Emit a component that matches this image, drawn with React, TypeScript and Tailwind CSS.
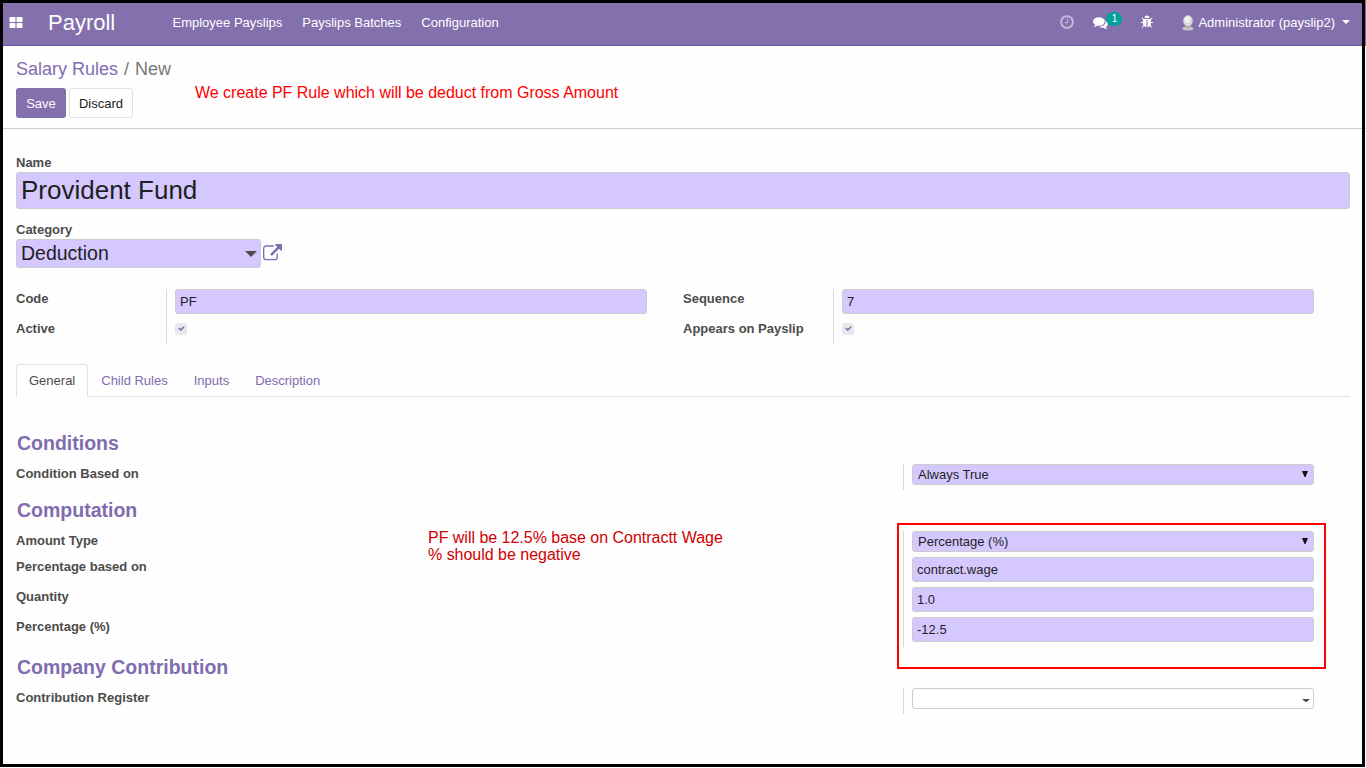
import type { ReactNode } from "react";

const icons = {
  thLarge:
    "M832 1024v384q0 52-38 90t-90 38h-512q-52 0-90-38t-38-90v-384q0-52 38-90t90-38h512q52 0 90 38t38 90zm0-768v384q0 52-38 90t-90 38h-512q-52 0-90-38t-38-90v-384q0-52 38-90t90-38h512q52 0 90 38t38 90zm896 768v384q0 52-38 90t-90 38h-512q-52 0-90-38t-38-90v-384q0-52 38-90t90-38h512q52 0 90 38t38 90zm0-768v384q0 52-38 90t-90 38h-512q-52 0-90-38t-38-90v-384q0-52 38-90t90-38h512q52 0 90 38t38 90z",
  clock:
    "M1024 544v448q0 14-9 23t-23 9h-320q-14 0-23-9t-9-23v-64q0-14 9-23t23-9h224v-352q0-14 9-23t23-9h64q14 0 23 9t9 23zm416 352q0-148-73-273t-198-198-273-73-273 73-198 198-73 273 73 273 198 198 273 73 273-73 198-198 73-273zm224 0q0 209-103 385.5t-279.5 279.5-385.5 103-385.5-103-279.5-279.5-103-385.5 103-385.5 279.5-279.5 385.5-103 385.5 103 279.5 279.5 103 385.5z",
  comments:
    "M1408 768q0 139-94 257t-256.5 186.5-353.5 68.5q-86 0-176-16-124 88-278 128-36 9-86 16h-3q-11 0-20.5-8t-11.5-21q-1-3-1-6.5t.5-6.5 2-6l2.5-5 3.5-5.5 4-5 4.5-5 4-4.5q5-6 23-25t26-29.5 22.5-29 25-38.5 20.5-44q-124-72-195-177t-71-224q0-139 94-257t256.5-186.5 353.5-68.5 353.5 68.5 256.5 186.5 94 257zm384 256q0 120-71 224.5t-195 176.5q10 24 20.5 44t25 38.5 22.5 29 26 29.5 23 25q1 1 4 4.5t4.5 5 4 5 3.5 5.5l2.5 5 2 6 .5 6.5-1 6.5q-3 14-13 22t-22 7q-50-7-86-16-154-40-278-128-90 16-176 16-271 0-472-132 58 4 88 4 161 0 309-45t264-129q125-92 192-212t67-254q0-77-23-152 129 71 204 178t75 230z",
  bug: "M1696 960q0 26-19 45t-45 19h-224q0 171-67 290l208 209q19 19 19 45t-19 45q-18 19-45 19t-45-19l-198-197q-5 5-15 13t-42 28.5-65 36.5-82 29-97 13v-896h-128v896q-51 0-101.5-13.5t-87-33-66-39-43.5-32.5l-15-14-183 207q-20 21-48 21-24 0-43-16-19-18-20.5-44.5t15.5-46.5l202-227q-58-114-58-274h-224q-26 0-45-19t-19-45 19-45 45-19h224v-294l-173-173q-19-19-19-45t19-45 45-19 45 19l173 173h844l173-173q19-19 45-19t45 19 19 45-19 45l-173 173v294h224q26 0 45 19t19 45zm-480-576h-640q0-133 93.5-226.5t226.5-93.5 226.5 93.5 93.5 226.5z",
  externalLink:
    "M1408 928v320q0 119-84.5 203.5t-203.5 84.5h-832q-119 0-203.5-84.5t-84.5-203.5v-832q0-119 84.5-203.5t203.5-84.5h704q14 0 23 9t9 23v64q0 14-9 23t-23 9h-704q-66 0-113 47t-47 113v832q0 66 47 113t113 47h832q66 0 113-47t47-113v-320q0-14 9-23t23-9h64q14 0 23 9t9 23zm384-864v512q0 26-19 45t-45 19-45-19l-176-176-652 652q-10 10-23 10t-23-10l-114-114q-10-10-10-23t10-23l652-652-176-176q-19-19-19-45t19-45 45-19h512q26 0 45 19t19 45z",
  check:
    "M1671 566q0 40-28 68l-724 724-136 136q-28 28-68 28t-68-28l-136-136-362-362q-28-28-28-68t28-68l136-136q28-28 68-28t68 28l294 295 656-657q28-28 68-28t68 28l136 136q28 28 28 68z",
};

const menus = ["Employee Payslips", "Payslips Batches", "Configuration"];
const tabs = ["General", "Child Rules", "Inputs", "Description"];

function Icon({ name, className }: { name: keyof typeof icons; className: string }) {
  return (
    <svg viewBox="0 0 1792 1792" fill="currentColor" className={className} aria-hidden="true">
      <path d={icons[name]} />
    </svg>
  );
}

function Avatar() {
  return (
    <svg viewBox="0 0 12 16" className="mr-1 h-4 w-3" aria-hidden="true">
      <path d="M.3 14.2q0-2 3.4-2.6h4.6q3.2.6 3.2 2.6-2 1.3-5.6 1.3T.3 14.2z" fill="#c9c9c9" />
      <path d="M3.6 10h4.8v3q-2.4 1-4.8 0z" fill="#b0b0b0" />
      <ellipse cx="6" cy="5.8" rx="4.8" ry="5.5" fill="#dadada" />
      <ellipse cx="5.4" cy="4.6" rx="2.8" ry="3.4" fill="#efefef" />
    </svg>
  );
}

function TextField({ value }: { value: string }) {
  return (
    <div className="flex h-[25px] items-center rounded-[3px] border border-[#ccc] bg-[#d4c8ff] px-1 text-[#1f1f1f]">
      {value}
    </div>
  );
}

function SelectField({ value }: { value: string }) {
  return (
    <div className="flex h-[21px] items-center justify-between rounded-[3px] border border-[#ccc] bg-[#d4c8ff] px-[5px] text-[#1f1f1f]">
      <span>{value}</span>
      <svg viewBox="0 0 6 6" className="mb-px h-1.5 w-1.5" fill="#111">
        <path d="M0 0h6L3.5 6h-1z" />
      </svg>
    </div>
  );
}

function Checkbox() {
  return (
    <div className="flex h-3 w-3 items-center justify-center rounded-[3px] bg-[#e9e6ec] pb-px text-[#7c66aa]">
      <Icon name="check" className="h-[7px] w-[7px]" />
    </div>
  );
}

function Label({ children }: { children: ReactNode }) {
  return <div className="font-bold text-[#4c4c4c]">{children}</div>;
}

function Heading({ children }: { children: ReactNode }) {
  return <h2 className="pl-px text-[19.5px] leading-[22px] font-bold text-[#806cae]">{children}</h2>;
}

function HalfGroup({ first, value, second }: { first: string; value: string; second: string }) {
  return (
    <div className="flex h-[55px] w-[667px]">
      <div className="flex w-[150px] flex-col gap-[15px] pt-0.5">
        <Label>{first}</Label>
        <Label>{second}</Label>
      </div>
      <div className="w-[481px] border-l border-[#d9d9d9] pl-2">
        <TextField value={value} />
        <div className="pt-[9px]">
          <Checkbox />
        </div>
      </div>
    </div>
  );
}

export default function App() {
  return (
    <div className="relative h-[768px] w-[1366px] overflow-hidden bg-[#fefefe] font-['Liberation_Sans',Arial,sans-serif] text-[13px] leading-[15px]">
      <header className="flex h-[46px] items-center border-b border-[#6a51a0] bg-[#8470ad] pr-4 pl-[9px] text-white">
        <Icon name="thLarge" className="h-[14px] w-[14px]" />
        <div className="ml-[25px] w-[124.5px] text-[22px] leading-6">Payroll</div>
        <nav className="flex flex-1 gap-5">
          {menus.map((menu) => (
            <a key={menu}>{menu}</a>
          ))}
        </nav>
        <Icon name="clock" className="mr-[18px] mb-0.5 h-4 w-4 text-[#c3b8d8]" />
        <div className="relative mr-8 mb-px">
          <Icon name="comments" className="h-[15px] w-[15px]" />
          <span className="absolute -top-[3px] left-[13px] flex h-[14px] w-4 items-center justify-center rounded-full bg-[#00a09d] text-[10px]">
            1
          </span>
        </div>
        <Icon name="bug" className="mr-7 mb-px h-[14px] w-[14px]" />
        <Avatar />
        <span>Administrator (payslip2)</span>
        <svg viewBox="0 0 8 4" className="mb-px ml-[7px] h-1 w-2" fill="currentColor">
          <path d="M0 0h8L4 4z" />
        </svg>
      </header>

      <section className="h-[83px] border-b border-[#ccc] px-4 pt-[13px]">
        <div className="text-[18px] leading-[21px] text-[#777]">
          <span className="text-[#806cae]">Salary Rules</span>
          <span className="px-1.5">/</span>New
        </div>
        <div className="flex pt-2">
          <button className="h-[30px] w-[50px] rounded-[3px] bg-[#8470ad] text-white">Save</button>
          <button className="ml-[3px] h-[30px] w-16 rounded-[3px] border border-[#d9e2ec] bg-white text-[#222]">
            Discard
          </button>
        </div>
      </section>

      <main className="px-4 pt-[26px]">
        <Label>Name</Label>
        <div className="mt-0.5 flex h-[37px] items-center rounded-[3px] border border-[#ccc] bg-[#d4c8ff] px-1 pb-px text-[26px] text-[#1f1f1f]">
          Provident Fund
        </div>

        <div className="pt-[13px]">
          <Label>Category</Label>
          <div className="mt-0.5 flex items-center">
            <div className="flex h-[29px] w-[245px] items-center justify-between rounded-[3px] border border-[#ccc] bg-[#d4c8ff] pr-[3px] pl-1 text-[19.5px] text-[#1f1f1f]">
              <span>Deduction</span>
              <svg viewBox="0 0 12 6" className="h-1.5 w-3" fill="#4c4c4c">
                <path d="M0 0h12L6 6z" />
              </svg>
            </div>
            <Icon name="externalLink" className="ml-0.5 h-[19px] w-[19px] text-[#806cae]" />
          </div>
        </div>

        <div className="flex pt-[21px]">
          <HalfGroup first="Code" value="PF" second="Active" />
          <HalfGroup first="Sequence" value="7" second="Appears on Payslip" />
        </div>

        <div className="mt-5 flex h-[33px] border-b border-[#d9e2ec]">
          {tabs.map((tab, i) => (
            <div
              key={tab}
              className={
                i === 0
                  ? "h-[33px] rounded-t-[3px] border border-b-0 border-[#d9e2ec] bg-[#fefefe] px-3 pt-2 text-[#4c4c4c]"
                  : "px-[13px] pt-[9px] text-[#806cae]"
              }
            >
              {tab}
            </div>
          ))}
        </div>

        <div className="pt-[35px]">
          <Heading>Conditions</Heading>
          <div className="mt-[10px] flex h-[26px]">
            <div className="w-[887px] pt-0.5">
              <Label>Condition Based on</Label>
            </div>
            <div className="w-[411px] border-l border-[#d9d9d9] pl-2">
              <SelectField value="Always True" />
            </div>
          </div>
        </div>

        <div className="pt-[9px]">
          <Heading>Computation</Heading>
          <div className="mt-[10px] flex h-[116px]">
            <div className="w-[887px] pt-0.5">
              <Label>Amount Type</Label>
              <div className="flex flex-col gap-[15px] pt-[11px]">
                <Label>Percentage based on</Label>
                <Label>Quantity</Label>
                <Label>Percentage (%)</Label>
              </div>
            </div>
            <div className="flex w-[411px] flex-col gap-[5px] border-l border-[#d9d9d9] pl-2">
              <SelectField value="Percentage (%)" />
              <TextField value="contract.wage" />
              <TextField value="1.0" />
              <TextField value="-12.5" />
            </div>
          </div>
        </div>

        <div className="pt-[9px]">
          <Heading>Company Contribution</Heading>
          <div className="mt-[10px] flex h-[26px]">
            <div className="w-[887px] pt-0.5">
              <Label>Contribution Register</Label>
            </div>
            <div className="w-[411px] border-l border-[#d9d9d9] pl-2">
              <div className="flex h-[21px] items-center justify-end rounded-[3px] border border-[#ccc] bg-white pt-1 pr-[3px]">
                <svg viewBox="0 0 8 3" className="h-[3px] w-2" fill="#4c4c4c">
                  <path d="M0 0h8L4.5 3h-1z" />
                </svg>
              </div>
            </div>
          </div>
        </div>
      </main>

      {/* Annotations over the form */}
      <p className="absolute top-[84px] left-[195px] text-[16px] leading-[18px] tracking-[-0.012px] whitespace-nowrap text-[#f00]">
        We create PF Rule which will be deduct from Gross Amount
      </p>
      <p className="absolute top-[529px] left-[428px] text-[16px] leading-[17px] tracking-[-0.02px] whitespace-nowrap text-[#d00000]">
        PF will be 12.5% base on Contractt Wage
        <br />% should be negative
      </p>
      <div className="absolute top-[523px] left-[897px] h-[146px] w-[429px] border-2 border-[#f00]" />
      <div className="pointer-events-none absolute top-0 left-0 h-[767px] w-[1365px] border-3 border-black" />
    </div>
  );
}
